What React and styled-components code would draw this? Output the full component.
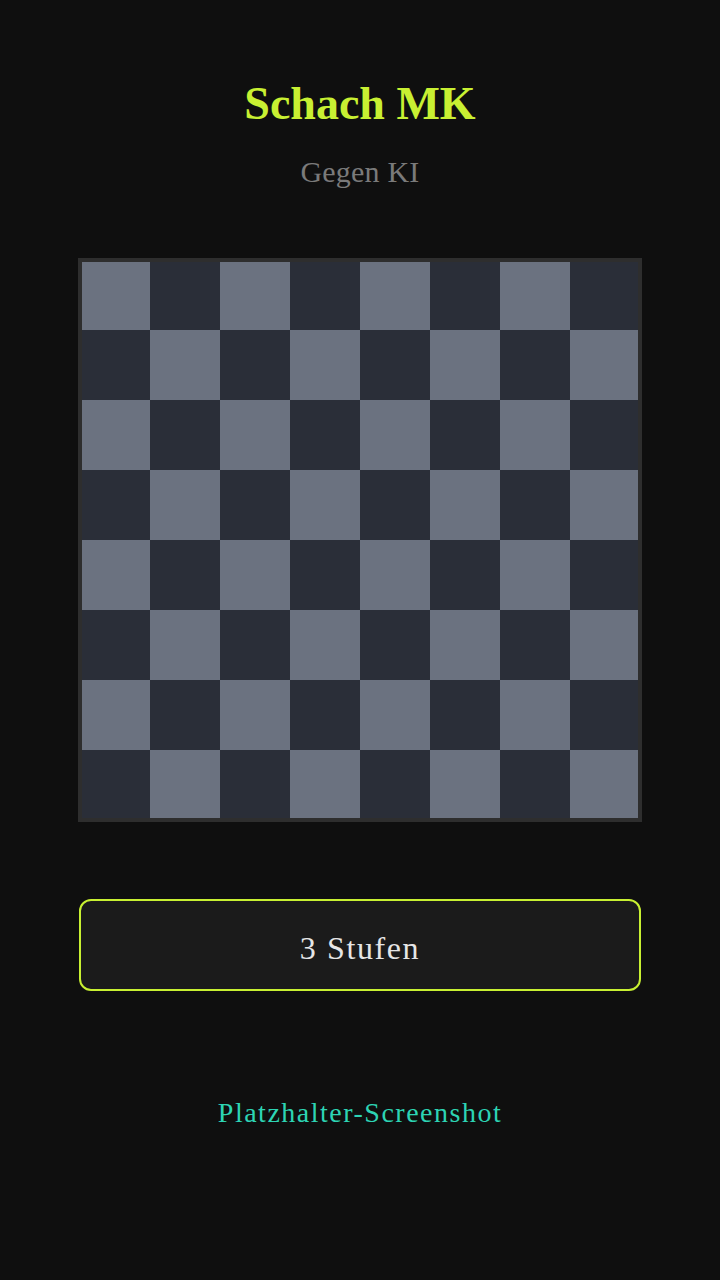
import React from "react";
import styled, { createGlobalStyle } from "styled-components";

const GlobalStyle = createGlobalStyle`
  html, body {
    margin: 0;
    padding: 0;
    background: #0f0f0f;
  }
  * { box-sizing: border-box; }
`;

const Page = styled.main`
  min-height: 1280px;
  display: flex;
  flex-direction: column;
  align-items: center;
  padding-top: 76px;
  font-family: "Liberation Serif", "Times New Roman", serif;
`;

const Title = styled.h1`
  margin: 0;
  font-size: 46px;
  line-height: 56px;
  font-weight: 700;
  color: #c8f032;
`;

const Subtitle = styled.p`
  margin: 22px 0 0;
  font-size: 30px;
  line-height: 36px;
  color: #7a7a7a;
  letter-spacing: 0.2px;
`;

const Board = styled.div`
  margin-top: 68px;
  width: 564px;
  height: 564px;
  border: 4px solid #2e2e2e;
  display: grid;
  grid-template-columns: 68px repeat(6, 70px) 68px;
  grid-template-rows: 68px repeat(6, 70px) 68px;
`;

const Square = styled.div`
  background: ${(p) => (p.$light ? "#6b7280" : "#2a2e38")};
`;

const LevelButton = styled.button`
  margin-top: 77px;
  width: 562px;
  height: 92px;
  border: 2px solid #c8f032;
  border-radius: 12px;
  background: #1b1b1b;
  color: #e6e6e6;
  font-family: "Liberation Serif", "Times New Roman", serif;
  font-size: 32px;
  letter-spacing: 1.6px;
  padding: 6px 0 0;
  display: flex;
  align-items: center;
  justify-content: center;
  cursor: pointer;
`;

const Footer = styled.p`
  margin: 106px 0 0;
  font-size: 28px;
  line-height: 32px;
  letter-spacing: 1.5px;
  color: #2dd4b4;
`;

const squares = Array.from({ length: 64 }, (_, i) => {
  const r = Math.floor(i / 8);
  const c = i % 8;
  return (r + c) % 2 === 0;
});

export default function App() {
  return (
    <>
      <GlobalStyle />
      <Page>
        <Title>Schach MK</Title>
        <Subtitle>Gegen KI</Subtitle>
        <Board>
          {squares.map((light, i) => (
            <Square key={i} $light={light} />
          ))}
        </Board>
        <LevelButton>3 Stufen</LevelButton>
        <Footer>Platzhalter-Screenshot</Footer>
      </Page>
    </>
  );
}
